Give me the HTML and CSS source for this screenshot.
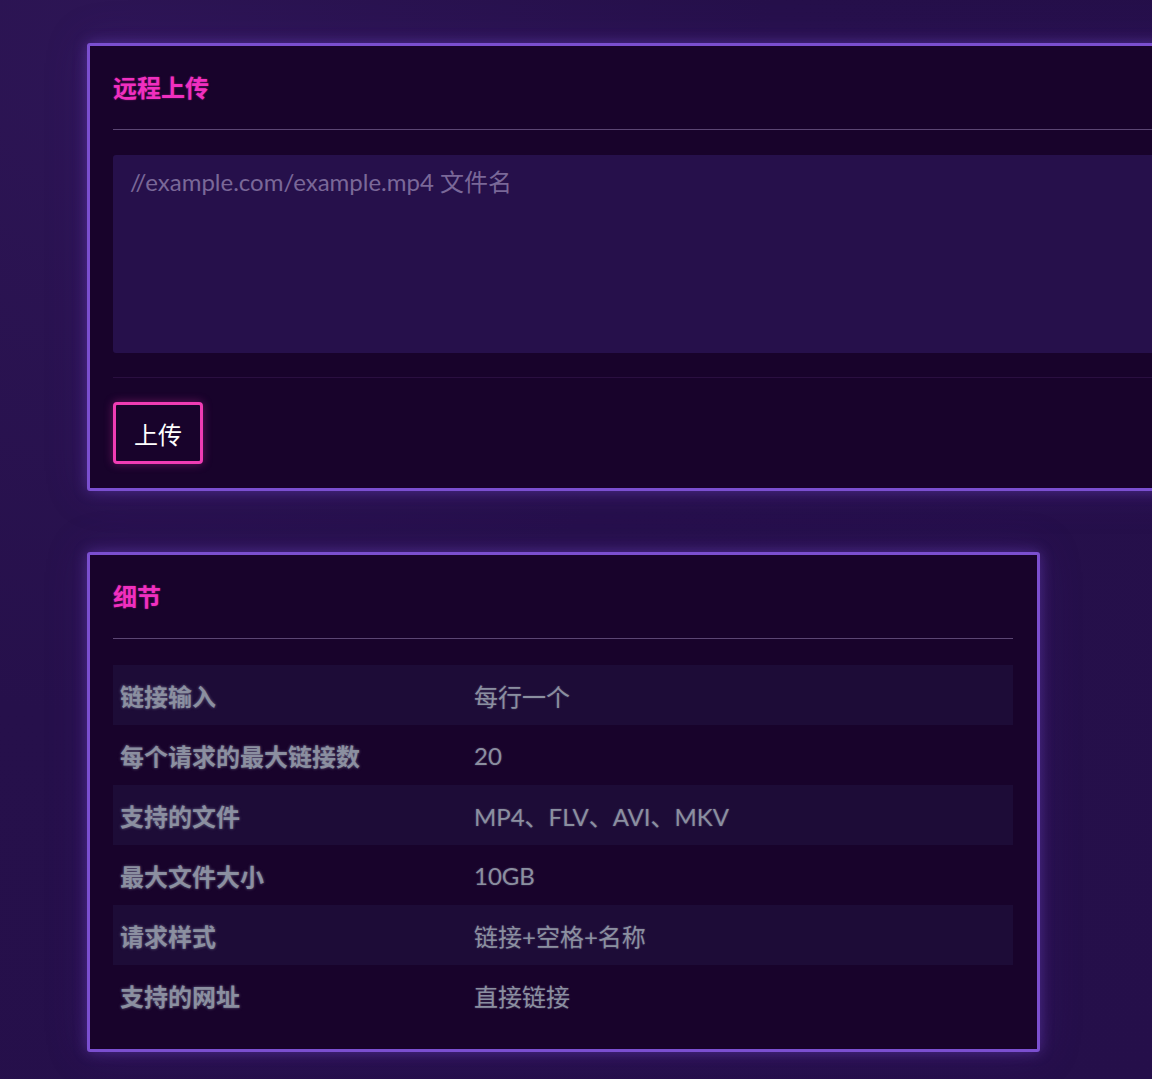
FILE: index.html
```html
<!DOCTYPE html>
<html lang="zh">
<head>
<meta charset="utf-8">
<title>远程上传</title>
<link rel="stylesheet" href="styles.css">
</head>
<body>
<main class="page">
  <section class="card card-wide">
    <h2 class="card-title">远程上传</h2>
    <div class="divider"></div>
    <textarea class="url-input" placeholder="//example.com/example.mp4 文件名"></textarea>
    <div class="footer-line"></div>
    <button class="upload-btn" type="button">上传</button>
  </section>

  <section class="card card-details">
    <h2 class="card-title">细节</h2>
    <div class="divider"></div>
    <table class="details">
      <tbody>
        <tr><th>链接输入</th><td>每行一个</td></tr>
        <tr><th>每个请求的最大链接数</th><td>20</td></tr>
        <tr><th>支持的文件</th><td>MP4、FLV、AVI、MKV</td></tr>
        <tr><th>最大文件大小</th><td>10GB</td></tr>
        <tr><th>请求样式</th><td>链接+空格+名称</td></tr>
        <tr><th>支持的网址</th><td>直接链接</td></tr>
      </tbody>
    </table>
  </section>
</main>
</body>
</html>
```

FILE: styles.css
```css
html {
  overflow: hidden;
}
body {
  margin: 0;
  min-height: 1079px;
  background: radial-gradient(ellipse at 10% 5%, #2d1555 0%, #26104b 45%, #250f4a 100%);
  font-family: Lato, "Noto Sans CJK SC", sans-serif;
  color: #8b8fa0;
}
.page {
  padding: 43px 0 40px 87px;
  display: flex;
  flex-direction: column;
  align-items: flex-start;
  gap: 61px;
}
.card {
  box-sizing: border-box;
  background: #18032b;
  border: 3px solid #7b4fd0;
  border-radius: 3px;
  padding: 24px 24px 24px 23px;
  box-shadow: 0 0 14px rgba(123, 79, 208, 0.45), 0 0 40px rgba(80, 30, 150, 0.25);
}
.card-wide {
  width: 1120px;
}
.card-details {
  width: 953px;
}
.card-title {
  margin: 0;
  font-family: "Noto Sans CJK SC", sans-serif;
  font-weight: 700;
  font-size: 24px;
  line-height: 33px;
  color: #f02fbf;
  text-shadow: 0 0 2px rgba(240, 47, 191, 0.5);
}
.divider {
  height: 1px;
  background: #5b4673;
  margin: 26px 0 26px;
}
.card-wide .divider {
  margin-bottom: 25px;
}
.url-input {
  display: block;
  box-sizing: border-box;
  width: 100%;
  height: 198px;
  resize: none;
  border: none;
  border-radius: 3px;
  background: #26104b;
  padding: 11px 17px;
  font-family: Lato, "Noto Sans CJK SC", sans-serif;
  font-size: 24px;
  line-height: 32px;
  color: #c8c0dc;
  outline: none;
}
.url-input::placeholder {
  color: #7a6898;
}
.footer-line {
  height: 1px;
  background: #2a0f40;
  margin: 24px 0 24px;
}
.upload-btn {
  box-sizing: border-box;
  width: 90px;
  height: 62px;
  background: #18032b;
  border: 3px solid #f03cb4;
  border-radius: 4px;
  color: #ffffff;
  font-family: "Noto Sans CJK SC", sans-serif;
  font-size: 24px;
  box-shadow: 0 0 10px rgba(240, 60, 180, 0.35);
  cursor: pointer;
}
.details {
  width: 900px;
  border-collapse: collapse;
}
.details tr {
  height: 60px;
}
.details tr:nth-child(odd) {
  background: #1d0c37;
}
.details th {
  width: 340px;
  text-align: left;
  padding: 0 7px;
  font-family: "Noto Sans CJK SC", sans-serif;
  font-weight: 700;
  font-size: 24px;
  color: #8b8fa0;
  text-shadow: 0 0 3px rgba(160, 170, 190, 0.6);
}
.details td {
  padding: 0 7px;
  font-family: Lato, "Noto Sans CJK SC", sans-serif;
  font-size: 24px;
  color: #8b8fa0;
  text-shadow: 0 0 2px rgba(160, 170, 190, 0.4);
}
```
